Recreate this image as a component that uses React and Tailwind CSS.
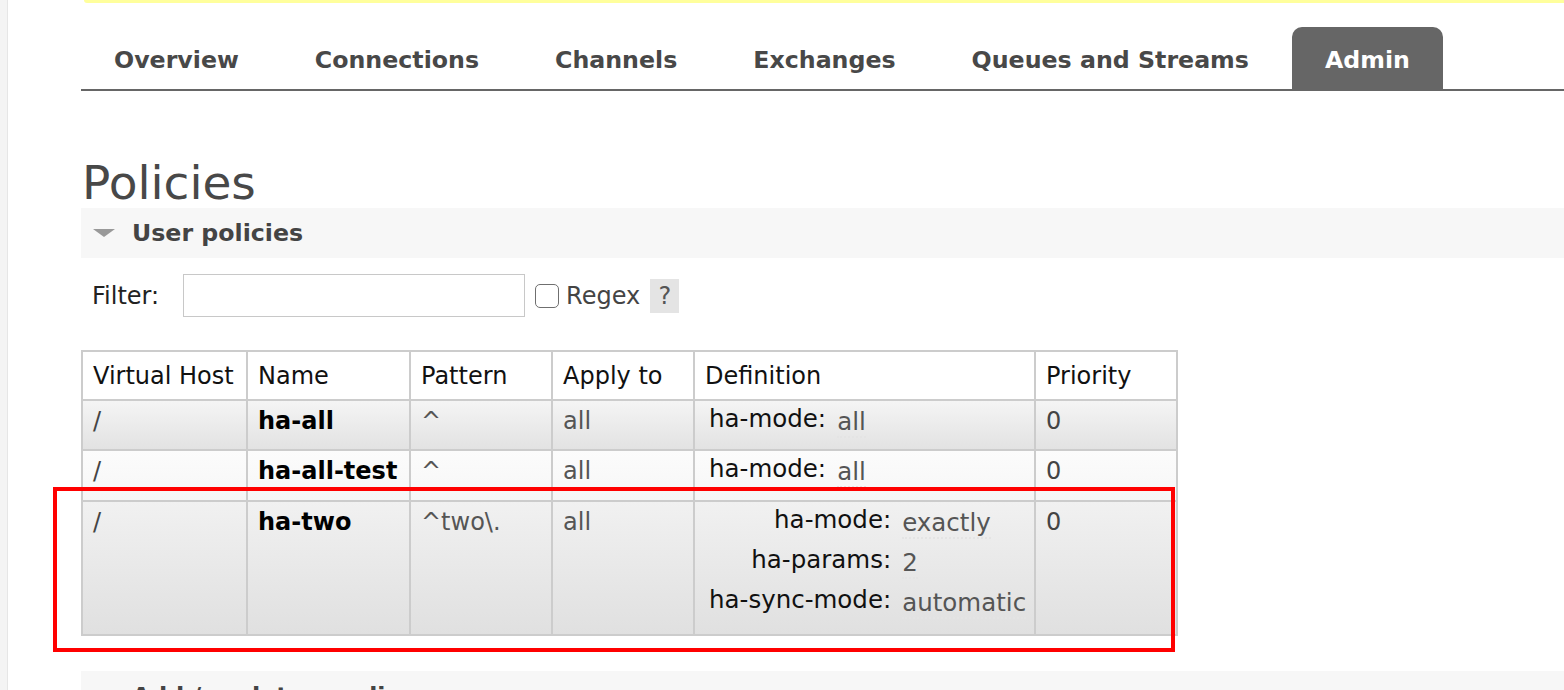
import React from "react";

const FONT = { fontFamily: '"DejaVu Sans", Verdana, sans-serif' };

function Tabs() {
  const tabs = ["Overview", "Connections", "Channels", "Exchanges", "Queues and Streams", "Admin"];
  return (
    <ul className="mt-[24px] flex gap-[10px] border-b-2 border-[#666]">
      {tabs.map((t) => (
        <li
          key={t}
          className={
            "flex h-[62px] items-center px-[33px] pt-[3px] text-[23.7px] font-bold leading-[28px] rounded-t-[10px] " +
            (t === "Admin" ? "bg-[#666] text-white" : "text-[#484848]")
          }
        >
          {t}
        </li>
      ))}
    </ul>
  );
}

function SectionHeader({ title, open }) {
  return (
    <div className="flex h-[50px] items-center bg-[#f7f7f7] pl-[12px]">
      <svg width="22" height="10" viewBox="0 0 22 10" className="mr-[17px]">
        {open ? <polygon points="0,1 22,1 11,9" fill="#999" /> : <polygon points="6,0 16,5 6,10" fill="#999" />}
      </svg>
      <span className="text-[23.7px] font-bold leading-[28px] text-[#444]">{title}</span>
    </div>
  );
}

function Def({ items }) {
  return (
    <table className="border-collapse text-[24.5px]">
      <tbody>
        {items.map(([k, v]) => (
          <tr key={k}>
            <th className="pl-[8px] pr-[6px] pt-[3px] pb-[9px] text-right align-top font-normal text-[#111] leading-[28px] whitespace-nowrap">
              {k}
            </th>
            <td className="pl-[5px] pt-[6px] pb-[6px] align-top leading-[28px] text-[#555] whitespace-nowrap">
              <span className="border-b-2 border-dotted border-[#e4e4e4]">{v}</span>
            </td>
          </tr>
        ))}
      </tbody>
    </table>
  );
}

const rows = [
  {
    vhost: "/",
    name: "ha-all",
    pattern: "^",
    apply: "all",
    def: [["ha-mode:", "all"]],
    prio: "0",
    bg: "bg-linear-to-b from-[#f5f5f5] to-[#e2e2e2]",
    h: "h-[50px]",
  },
  {
    vhost: "/",
    name: "ha-all-test",
    pattern: "^",
    apply: "all",
    def: [["ha-mode:", "all"]],
    prio: "0",
    bg: "bg-linear-to-b from-[#fcfcfc] to-[#f6f6f6]",
    h: "h-[51px]",
  },
  {
    vhost: "/",
    name: "ha-two",
    pattern: "^two\\.",
    apply: "all",
    def: [
      ["ha-mode:", "exactly"],
      ["ha-params:", "2"],
      ["ha-sync-mode:", "automatic"],
    ],
    prio: "0",
    bg: "bg-linear-to-b from-[#f1f1f1] to-[#e0e0e0]",
    h: "h-[134px]",
  },
];

function PolicyTable() {
  const td = "border-2 border-[#cccccc] px-[10px] pt-[6px] pb-[12px] align-top leading-[28px]";
  const th = "border-2 border-[#cccccc] px-[10px] py-[9px] text-left font-normal leading-[28px] text-[#111] whitespace-nowrap";
  return (
    <div className="relative mt-[33px] w-[1095px]">
      <table className="w-[1095px] table-fixed border-collapse text-[24px]">
        <colgroup>
          <col className="w-[165px]" />
          <col className="w-[163px]" />
          <col className="w-[142px]" />
          <col className="w-[142px]" />
          <col className="w-[341px]" />
          <col className="w-[142px]" />
        </colgroup>
        <thead>
          <tr className="bg-white h-[49px]">
            <th className={th}>Virtual Host</th>
            <th className={th}>Name</th>
            <th className={th}>Pattern</th>
            <th className={th}>Apply to</th>
            <th className={th}>Definition</th>
            <th className={th}>Priority</th>
          </tr>
        </thead>
        <tbody>
          {rows.map((r) => (
            <tr key={r.name} className={r.bg + " " + r.h}>
              <td className={td + " text-[#444]"}>{r.vhost}</td>
              <td className={td + " font-bold text-black whitespace-nowrap"}>{r.name}</td>
              <td className={td + " text-[#555]"}>{r.pattern}</td>
              <td className={td + " text-[#555]"}>{r.apply}</td>
              <td className="border-2 border-[#cccccc] pl-[6px] pt-[1px] pb-[6px] align-top">
                <Def items={r.def} />
              </td>
              <td className={td + " text-[#444]"}>{r.prio}</td>
            </tr>
          ))}
        </tbody>
      </table>
      <div className="pointer-events-none absolute left-[-28px] top-[137px] h-[165px] w-[1122px] border-4 border-[#ff0000]" />
    </div>
  );
}

export default function App() {
  return (
    <div className="flex h-[690px] w-[1564px] overflow-hidden bg-white" style={FONT}>
      <div className="w-[8px] shrink-0 border-r border-[#e6e6e6] bg-[#f4f4f4]" />
      <div className="flex-1 pl-[73px]">
        <div className="ml-[3px] h-[3px] rounded-bl-[6px] bg-[#ffff9c]" />
        <Tabs />
        <h1 className="mt-[69px] mb-[2px] pl-[1px] text-[47px] font-normal leading-[46px] text-[#484848]">Policies</h1>
        <SectionHeader title="User policies" open />
        <div className="mt-[16px] flex h-[43px] items-center pl-[11px]">
          <span className="text-[24px] leading-[28px] text-[#222]">Filter:</span>
          <input
            type="text"
            className="ml-[24px] h-[43px] w-[342px] border border-[#c8c8c8] bg-white outline-none"
          />
          <span className="ml-[10px] h-[24px] w-[24px] rounded-[5px] border-[1.5px] border-[#6f6f6f] bg-white" />
          <span className="ml-[7px] text-[24px] leading-[28px] text-[#444]">Regex</span>
          <span className="ml-[10px] flex h-[34px] w-[29px] items-center justify-center bg-[#e4e4e4] text-[24px] text-[#555]">
            ?
          </span>
        </div>
        <PolicyTable />
        <div className="mt-[35px]">
          <SectionHeader title="Add / update a policy" />
        </div>
      </div>
    </div>
  );
}
